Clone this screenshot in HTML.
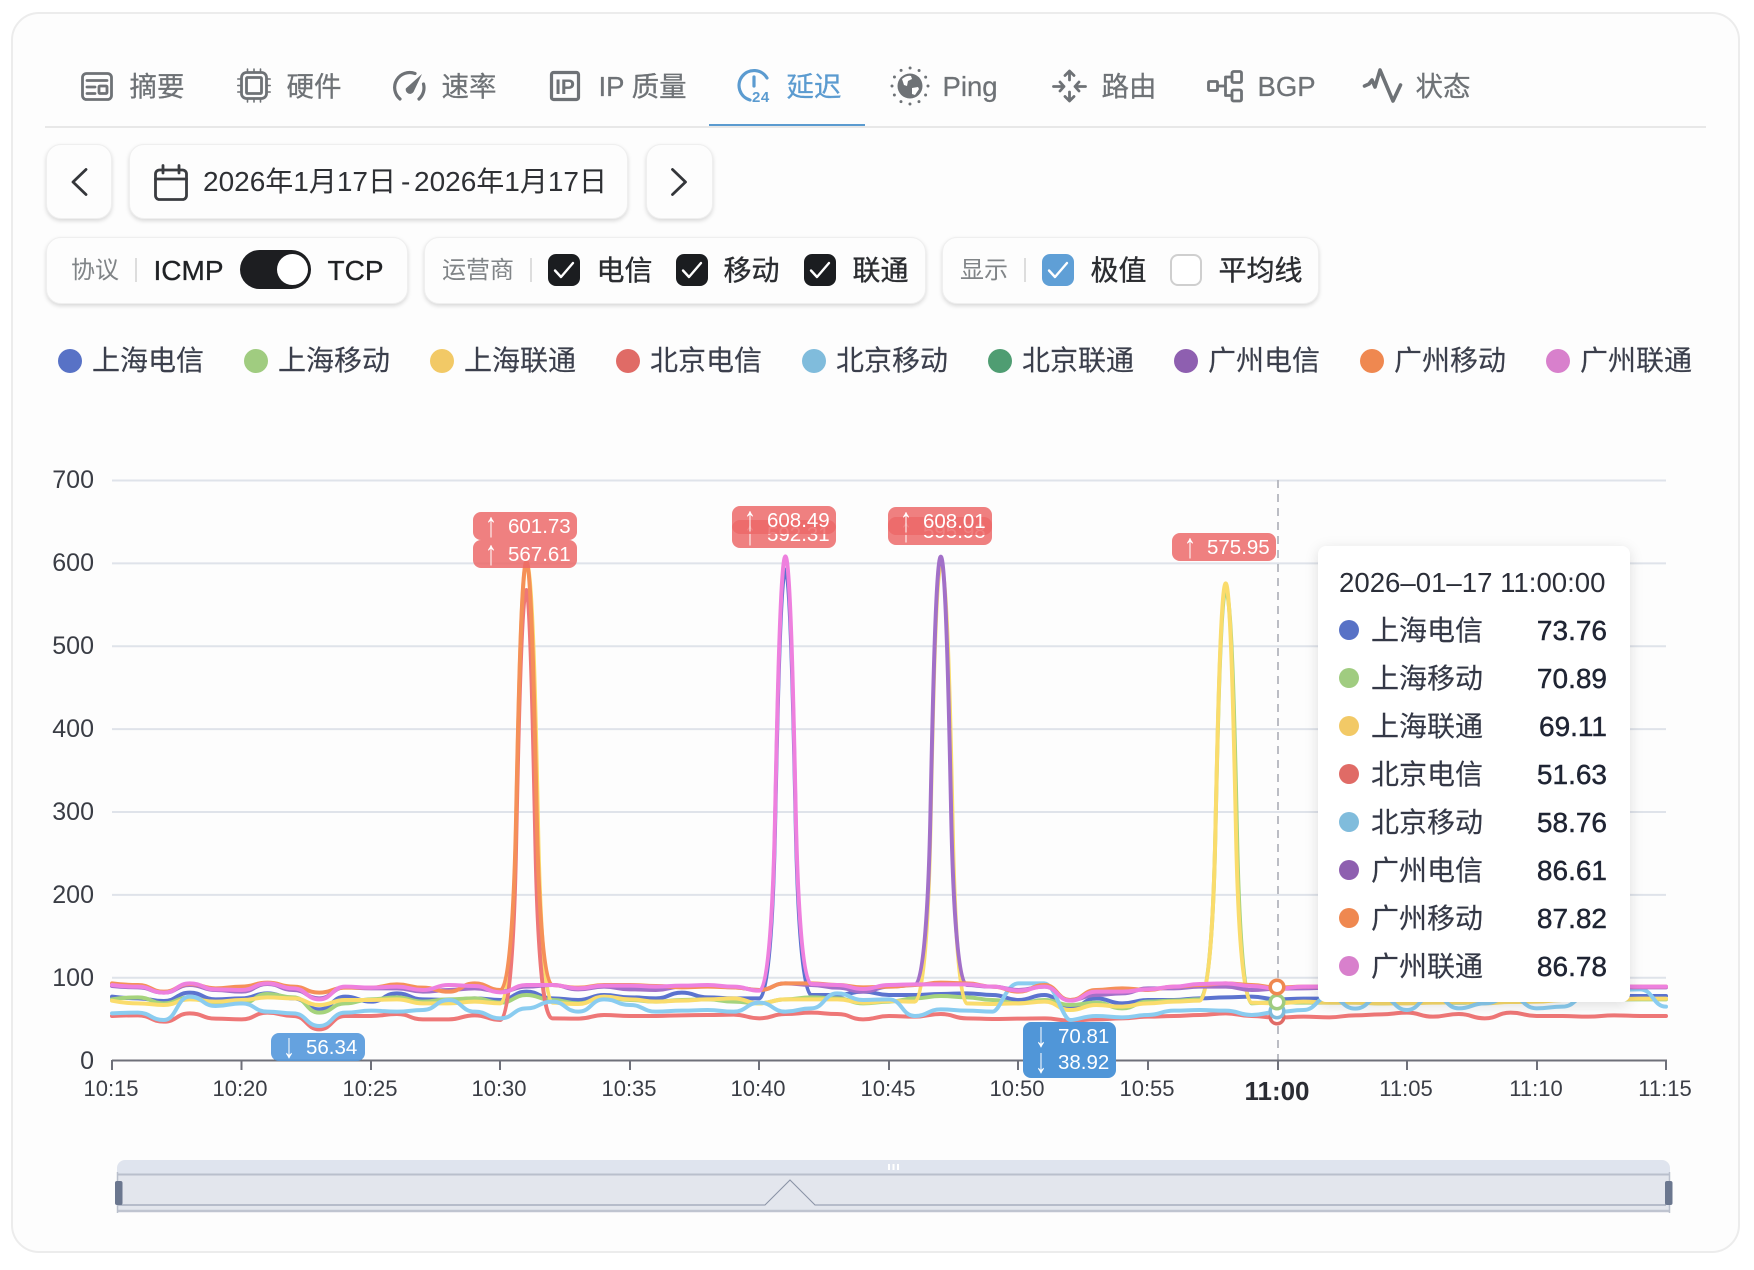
<!DOCTYPE html>
<html lang="zh"><head><meta charset="utf-8"><title>延迟</title>
<style>
html,body{margin:0;padding:0;background:#fff}
body{position:relative;width:1754px;height:1270px;overflow:hidden;font-family:"Liberation Sans","Noto Sans CJK SC",sans-serif}
#card{position:absolute;left:11px;top:12px;width:1725px;height:1237px;border:2px solid #ececec;border-radius:28px;background:#fdfdfd}
.t{position:absolute;white-space:nowrap;line-height:1}
.tab{font-size:27.5px;color:#6e7276;margin:.5px 0 0 -.5px;-webkit-text-stroke:.25px #6e7276}
.box{position:absolute;background:#fdfdfd;border:1px solid #efefef;border-radius:15px;box-shadow:0 2px 4px rgba(0,0,0,.15);box-sizing:border-box}
.sep{position:absolute;width:2px;background:#ddd;top:258px;height:24px}
.g{font-size:24px;color:#808487;margin:1px 0 0 -1px}
.d{font-size:28px;color:#2b2d31;margin:.5px 0 0 -.5px;-webkit-text-stroke:.35px #2b2d31}
.cb{position:absolute;top:254px;width:32px;height:32px;border-radius:8px;background:#1b1d20}
.cb svg{position:absolute;left:0;top:0}
.dot{position:absolute;border-radius:50%}
.lg{font-size:28px;color:#3b3f4c;margin:.75px 0 0 -1px;-webkit-text-stroke:.15px #3b3f4c}
.yl{font-size:25px;color:#3a3d45;text-align:right;width:60px;left:34px}
.xl{font-size:22px;color:#3a3d45;text-align:center;width:80px;margin-top:.5px}
.lb{position:absolute;width:104px;height:28px;border-radius:8px;background:rgba(236,104,104,.84);color:#fff;font-size:20.5px;line-height:29px;box-sizing:border-box;padding-left:35px;white-space:nowrap}
.lb i{position:absolute;left:12px;top:-1px;font-style:normal;font-size:24px;transform:scale(1,1.45)}
.bl{background:rgba(84,152,220,.9)}
#tip{position:absolute;left:1318px;top:546px;width:312px;height:456px;background:#fff;border-radius:8px;box-shadow:0 3px 14px rgba(0,0,0,.13)}
.tn{font-size:28px;color:#343846;left:1371px;-webkit-text-stroke:.15px #343846}
.tv{font-size:28px;color:#1f2433;left:1480px;width:127px;text-align:right;-webkit-text-stroke:.45px #1f2433}
svg{position:absolute;overflow:visible}
.ic{fill:none;stroke:#6e7276;stroke-width:2.8;stroke-linecap:round;stroke-linejoin:round}
.ln path{fill:none;stroke-width:4;stroke-linecap:round;stroke-linejoin:round;vector-effect:non-scaling-stroke}
</style></head><body>
<div id="card"></div>

<!-- tabs -->
<svg class="ic" style="left:81px;top:72px" width="32" height="29"><rect x="1.5" y="1.5" width="29" height="26" rx="4"/><path d="M6 8.5H26M6 15H14M6 21.500H14"/><rect x="18" y="14" width="8" height="7.500" rx="1"/></svg>
<div class="t tab" style="left:130px;top:72px">摘要</div>
<svg class="ic" style="left:237px;top:68px" width="34" height="35"><rect x="4.500" y="4.500" width="25" height="26" rx="5"/><rect x="9.500" y="9.500" width="15" height="16" rx="1"/><path stroke-width="1.600" d="M.8 11H4M.8 17.500H4M.8 24H4M30 11H33.200M30 17.500H33.200M30 24H33.200M10.500 1V4M17 1V4M23.500 1V4M10.500 31V34M17 31V34M23.500 31V34"/></svg>
<div class="t tab" style="left:287px;top:72px">硬件</div>
<svg style="left:392px;top:71px" width="34" height="30"><path class="ic" style="stroke-width:3.2" d="M8 28A15 15 0 0 1 23 2.500M31.500 13A15 15 0 0 1 27 28"/><path fill="#6e7276" d="M30 3L21.500 21A4.300 4.300 0 0 1 13.800 17.500Z"/></svg>
<div class="t tab" style="left:442px;top:72px">速率</div>
<svg style="left:550px;top:71px" width="30" height="30"><rect class="ic" style="stroke-width:3.2" x="1.500" y="1.500" width="27" height="27" rx="2"/><text x="15" y="23" text-anchor="middle" font-family="Liberation Sans" font-weight="bold" font-size="21" fill="#6e7276">IP</text></svg>
<div class="t tab" style="left:599px;top:72px">IP 质量</div>
<svg style="left:737px;top:69px" width="35" height="33"><path class="ic" style="stroke:#5b9bd0;stroke-width:3.2" d="M30 9A15 15 0 1 0 13 31M17 8V17"/><text x="15" y="33" font-family="Liberation Sans" font-weight="bold" font-size="15" letter-spacing=".5" fill="#5b9bd0">24</text></svg>
<div class="t tab" style="left:787px;top:72px;color:#5b9bd0;-webkit-text-stroke-color:#5b9bd0">延迟</div>
<div style="position:absolute;left:709px;top:124px;width:156px;height:2px;background:#5b9bd0"></div>
<svg style="left:890px;top:67px" width="40" height="38"><circle cx="20" cy="19" r="18" fill="none" stroke="#6e7276" stroke-width="3" stroke-linecap="round" stroke-dasharray="0 9.42"/><circle cx="20" cy="19" r="12.500" fill="#6e7276"/><path fill="#fff" d="M12 12q5-4 9-3l1 3-4 2-1 5-3-1-1-3zM22 21l6-1 1 2-4 6-3-1z"/></svg>
<div class="t tab" style="left:943px;top:72px">Ping</div>
<svg class="ic" style="left:1052px;top:69px" width="35" height="34"><path d="M17.500 11V2M13 6.500L17.500 2 22 6.500M17.500 23V32M13 27.500L17.500 32 22 27.500M1.500 17.500H12M8 13L12 17.500 8 22M33.500 17.500H23M27 13L23 17.500 27 22"/></svg>
<div class="t tab" style="left:1102px;top:72px">路由</div>
<svg class="ic" style="left:1207px;top:70px" width="36" height="32"><rect x="1.500" y="11.500" width="9" height="9" rx="1"/><rect x="25" y="1.500" width="9.500" height="11" rx="1.500"/><rect x="25" y="20" width="9.500" height="11" rx="1.500"/><path d="M10.500 16H18.500M25 7H18.500V25.500H25"/></svg>
<div class="t tab" style="left:1258px;top:72px">BGP</div>
<svg class="ic" style="left:1363px;top:68px" width="39" height="35"><path style="stroke-width:3.6" d="M1.500 18L6 16L9 12L12 19L17 2L30 33L37.500 17"/></svg>
<div class="t tab" style="left:1416px;top:72px">状态</div>
<div style="position:absolute;left:45px;top:126px;width:1661px;height:2px;background:#e8e8e8"></div>

<!-- date row -->
<div class="box" style="left:46px;top:144px;width:66px;height:75px"></div>
<svg class="ic" style="left:71px;top:168px;stroke:#34363a" width="16" height="28"><path d="M15 1.500L2 14 15 26.500"/></svg>
<div class="box" style="left:129px;top:144px;width:499px;height:75px"></div>
<svg class="ic" style="left:154px;top:164px;stroke:#3a3c40" width="34" height="37"><rect x="1.500" y="6" width="31" height="29.500" rx="4"/><path d="M1.500 15H32.500M9 1.500V9M25 1.500V9"/></svg>
<div class="t" style="left:203px;top:168px;font-size:28px;color:#2e3034">2026年1月17日</div>
<div class="t" style="left:401px;top:168px;font-size:28px;color:#2e3034">-</div>
<div class="t" style="left:414px;top:168px;font-size:28px;color:#2e3034">2026年1月17日</div>
<div class="box" style="left:646px;top:144px;width:67px;height:75px"></div>
<svg class="ic" style="left:671px;top:168px;stroke:#34363a" width="16" height="28"><path d="M1.500 1.500L14.500 14 1.500 26.500"/></svg>

<!-- filter row -->
<div class="box" style="left:46px;top:237px;width:362px;height:67px"></div>
<div class="t g" style="left:72px;top:258px">协议</div><div class="sep" style="left:135px"></div>
<div class="t d" style="left:154px;top:256px;color:#1f2124">ICMP</div>
<div style="position:absolute;left:240px;top:250px;width:71px;height:39px;border-radius:20px;background:#1d1e21"></div>
<div style="position:absolute;left:277px;top:254px;width:31px;height:31px;border-radius:50%;background:#fff"></div>
<div class="t d" style="left:328px;top:256px;color:#1f2124">TCP</div>

<div class="box" style="left:424px;top:237px;width:502px;height:67px"></div>
<div class="t g" style="left:443px;top:258px">运营商</div><div class="sep" style="left:530px"></div>
<div class="cb" style="left:548px"><svg width="32" height="32" fill="none" stroke="#fff" stroke-width="2.400" stroke-linecap="round" stroke-linejoin="round"><path d="M7 16.500L13 23L25 9"/></svg></div>
<div class="t d" style="left:597px;top:256px">电信</div>
<div class="cb" style="left:676px"><svg width="32" height="32" fill="none" stroke="#fff" stroke-width="2.400" stroke-linecap="round" stroke-linejoin="round"><path d="M7 16.500L13 23L25 9"/></svg></div>
<div class="t d" style="left:724px;top:256px">移动</div>
<div class="cb" style="left:804px"><svg width="32" height="32" fill="none" stroke="#fff" stroke-width="2.400" stroke-linecap="round" stroke-linejoin="round"><path d="M7 16.500L13 23L25 9"/></svg></div>
<div class="t d" style="left:853px;top:256px">联通</div>

<div class="box" style="left:942px;top:237px;width:377px;height:67px"></div>
<div class="t g" style="left:961px;top:258px">显示</div><div class="sep" style="left:1024px"></div>
<div class="cb" style="left:1042px;background:#5f9fd6"><svg width="32" height="32" fill="none" stroke="#fff" stroke-width="2.400" stroke-linecap="round" stroke-linejoin="round"><path d="M7 16.500L13 23L25 9"/></svg></div>
<div class="t d" style="left:1091px;top:256px">极值</div>
<div class="cb" style="left:1170px;background:#fff;border:2px solid #cfcfcf;box-sizing:border-box"></div>
<div class="t d" style="left:1219px;top:256px">平均线</div>

<!-- legend -->
<div class="dot" style="left:58px;top:349px;width:24px;height:24px;background:#5872c6"></div><div class="t lg" style="left:93px;top:346px">上海电信</div>
<div class="dot" style="left:244px;top:349px;width:24px;height:24px;background:#a0cc80"></div><div class="t lg" style="left:279px;top:346px">上海移动</div>
<div class="dot" style="left:430px;top:349px;width:24px;height:24px;background:#f2c966"></div><div class="t lg" style="left:465px;top:346px">上海联通</div>
<div class="dot" style="left:616px;top:349px;width:24px;height:24px;background:#e06b66"></div><div class="t lg" style="left:651px;top:346px">北京电信</div>
<div class="dot" style="left:802px;top:349px;width:24px;height:24px;background:#80bcdc"></div><div class="t lg" style="left:837px;top:346px">北京移动</div>
<div class="dot" style="left:988px;top:349px;width:24px;height:24px;background:#4f9d72"></div><div class="t lg" style="left:1023px;top:346px">北京联通</div>
<div class="dot" style="left:1174px;top:349px;width:24px;height:24px;background:#8e5fb0"></div><div class="t lg" style="left:1209px;top:346px">广州电信</div>
<div class="dot" style="left:1360px;top:349px;width:24px;height:24px;background:#ef8850"></div><div class="t lg" style="left:1395px;top:346px">广州移动</div>
<div class="dot" style="left:1546px;top:349px;width:24px;height:24px;background:#d880cc"></div><div class="t lg" style="left:1581px;top:346px">广州联通</div>

<!-- y labels -->
<div class="t yl" style="top:468px">700</div><div class="t yl" style="top:551px">600</div><div class="t yl" style="top:634px">500</div><div class="t yl" style="top:717px">400</div><div class="t yl" style="top:800px">300</div><div class="t yl" style="top:883px">200</div><div class="t yl" style="top:966px">100</div><div class="t yl" style="top:1049px">0</div>
<!-- x labels -->
<div class="t xl" style="left:71px;top:1077px">10:15</div><div class="t xl" style="left:200px;top:1077px">10:20</div><div class="t xl" style="left:330px;top:1077px">10:25</div><div class="t xl" style="left:459px;top:1077px">10:30</div><div class="t xl" style="left:589px;top:1077px">10:35</div><div class="t xl" style="left:718px;top:1077px">10:40</div><div class="t xl" style="left:848px;top:1077px">10:45</div><div class="t xl" style="left:977px;top:1077px">10:50</div><div class="t xl" style="left:1107px;top:1077px">10:55</div>
<div class="t xl" style="left:1237px;top:1077px;font-weight:bold;font-size:26px;color:#2a2c33">11:00</div>
<div class="t xl" style="left:1366px;top:1077px">11:05</div><div class="t xl" style="left:1496px;top:1077px">11:10</div><div class="t xl" style="left:1625px;top:1077px">11:15</div>

<!-- chart -->
<svg style="left:0;top:0" width="1754" height="1270">
<g stroke="#dfe3ea" stroke-width="2"><path d="M112 480.500H1666M112 563.400H1666M112 646.300H1666M112 729.100H1666M112 812H1666M112 894.900H1666M112 977.700H1666"/></g>
<path d="M1278 480V1060" stroke="#b4b6bd" stroke-width="1.800" stroke-dasharray="8 6"/>
<g class="ln" transform="translate(112 940) scale(25.9 .33333)">
<path stroke="#5b73cf" d="M0 170S.5 175 1 175S1.500 183 2 183S2.500 158 3 158S3.500 178 4 178S4.500 175 5 175S5.500 160 6 160S6.500 175 7 175S7.500 208 8 208S8.500 170 9 170S9.500 185 10 185S10.500 160 11 160S11.500 178 12 178S12.500 180 13 180S13.500 175 14 175S14.500 180 15 180S15.500 155 16 155S16.500 175 17 175S17.500 180 18 180S18.500 165 19 165S19.500 172 20 172S20.500 175 21 175S21.500 158 22 158S22.500 172 23 172S23.500 175 24 175S24.500 175 25 175C25.350 175 25.530 -82 25.600 -339C25.670 -597 25.800 -1111 26 -1111C26.200 -1111 26.330 -601 26.400 -345C26.470 -90 26.650 165 27 165S27.500 165 28 165S28.500 155 29 155S29.500 165 30 165S30.500 165 31 165S31.500 162 32 162S32.500 160 33 160S33.500 165 34 165S34.500 180 35 180S35.500 165 36 165S36.500 205 37 205S37.500 175 38 175S38.500 190 39 190S39.500 180 40 180S40.500 180 41 180S41.500 175 42 175S42.500 172 43 172S43.500 170 44 170S44.500 178 45 178S45.500 176 46 176S46.500 176 47 176S47.500 175 48 175S48.500 178 49 178S49.500 175 50 175S50.500 175 51 175S51.500 178 52 178S52.500 176 53 176S53.500 172 54 172S54.500 170 55 170S55.500 172 56 172S56.500 168 57 168S57.500 168 58 168S58.500 168 59 168S59.500 168 60 168"/>
<path stroke="#a5d37c" d="M0 178S.5 172 1 172S1.500 190 2 190S2.500 172 3 172S3.500 190 4 190S4.500 190 5 190S5.500 162 6 162S6.500 172 7 172S7.500 218 8 218S8.500 190 9 190S9.500 178 10 178S10.500 172 11 172S11.500 185 12 185S12.500 178 13 178S13.500 175 14 175S14.500 188 15 188S15.500 165 16 165S16.500 180 17 180S17.500 190 18 190S18.500 172 19 172S19.500 180 20 180S20.500 185 21 185S21.500 180 22 180S22.500 178 23 178S23.500 185 24 185S24.500 190 25 190S25.500 178 26 178S26.500 172 27 172S27.500 175 28 175S28.500 190 29 190S29.500 185 30 185S30.500 175 31 175S31.500 168 32 168S32.500 172 33 172S33.500 180 34 180S34.500 190 35 190S35.500 180 36 180S36.500 195 37 195S37.500 188 38 188S38.500 205 39 205S39.500 185 40 185S40.500 182 41 182S41.500 178 42 178C42.350 178 42.530 -68 42.600 -313C42.670 -559 42.800 -1050 43 -1050C43.240 -1050 43.370 -554 43.440 -306C43.510 -58 43.690 190 44 190S44.500 186 45 186S45.500 188 46 188S46.500 188 47 188S47.500 188 48 188S48.500 190 49 190S49.500 188 50 188S50.500 186 51 186S51.500 188 52 188S52.500 186 53 186S53.500 185 54 185S54.500 182 55 182S55.500 180 56 180S56.500 180 57 180S57.500 178 58 178S58.500 178 59 178S59.500 178 60 178"/>
<path stroke="#fadc6c" d="M0 182S.5 190 1 190S1.500 195 2 195S2.500 178 3 178S3.500 185 4 185S4.500 180 5 180S5.500 172 6 172S6.500 175 7 175S7.500 195 8 195S8.500 180 9 180S9.500 180 10 180S10.500 178 11 178S11.500 190 12 190S12.500 190 13 190S13.500 185 14 185S14.500 190 15 190C15.350 190 15.530 -74 15.600 -338C15.670 -603 15.800 -1131 16 -1131C16.250 -1131 16.380 -603 16.450 -340C16.520 -76 16.700 188 17 188S17.500 192 18 192S18.500 170 19 170S19.500 178 20 178S20.500 185 21 185S21.500 182 22 182S22.500 178 23 178S23.500 175 24 175S24.500 190 25 190S25.500 178 26 178S26.500 178 27 178S27.500 178 28 178S28.500 188 29 188S29.500 183 30 183S30.500 185 31 185C31.350 185 31.530 -76 31.600 -337C31.670 -598 31.800 -1120 32 -1120C32.260 -1120 32.390 -596 32.460 -334C32.530 -72 32.710 190 33 190S33.500 192 34 192S34.500 190 35 190S35.500 185 36 185S36.500 210 37 210S37.500 195 38 195S38.500 200 39 200S39.500 190 40 190S40.500 185 41 185S41.500 182 42 182C42.350 182 42.530 -68 42.600 -319C42.670 -569 42.800 -1070 43 -1070C43.200 -1070 43.330 -567 43.400 -315C43.470 -64 43.650 188 44 188S44.500 190 45 190S45.500 185 46 185S46.500 188 47 188S47.500 188 48 188S48.500 190 49 190S49.500 190 50 190S50.500 188 51 188S51.500 186 52 186S52.500 190 53 190S53.500 186 54 186S54.500 185 55 185S55.500 180 56 180S56.500 178 57 178S57.500 178 58 178S58.500 176 59 176S59.500 176 60 176"/>
<path stroke="#ee7777" d="M0 228S.5 226 1 226S1.500 245 2 245S2.500 220 3 220S3.500 236 4 236S4.500 238 5 238S5.500 218 6 218S6.500 228 7 228S7.500 268 8 268S8.500 228 9 228S9.500 228 10 228S10.500 222 11 222S11.500 238 12 238S12.500 238 13 238S13.500 226 14 226S14.500 240 15 240C15.350 240 15.530 -18 15.600 -276C15.670 -534 15.800 -1050 16 -1050C16.150 -1050 16.280 -536 16.350 -279C16.420 -22 16.600 235 17 235S17.500 236 18 236S18.500 225 19 225S19.500 228 20 228S20.500 228 21 228S21.500 226 22 226S22.500 225 23 225S23.500 224 24 224S24.500 235 25 235S25.500 222 26 222S26.500 218 27 218S27.500 222 28 222S28.500 238 29 238S29.500 228 30 228S30.500 230 31 230S31.500 222 32 222S32.500 235 33 235S33.500 237 34 237S34.500 236 35 236S35.500 235 36 235S36.500 242 37 242S37.500 238 38 238S38.500 235 39 235S39.500 230 40 230S40.500 228 41 228S41.500 225 42 225S42.500 220 43 220S43.500 228 44 228S44.500 233 45 233S45.500 230 46 230S46.500 232 47 232S47.500 226 48 226S48.500 223 49 223S49.500 218 50 218S50.500 230 51 230S51.500 222 52 222S52.500 235 53 235S53.500 218 54 218S54.500 228 55 228S55.500 228 56 228S56.500 230 57 230S57.500 226 58 226S58.500 228 59 228S59.500 228 60 228"/>
<path stroke="#8accf0" d="M0 220S.5 218 1 218S1.500 240 2 240S2.500 170 3 170S3.500 198 4 198S4.500 190 5 190S5.500 215 6 215S6.500 220 7 220S7.500 258 8 258S8.500 218 9 218S9.500 212 10 212S10.500 215 11 215S11.500 210 12 210S12.500 180 13 180S13.500 215 14 215S14.500 235 15 235S15.500 205 16 205S16.500 185 17 185S17.500 215 18 215S18.500 178 19 178S19.500 195 20 195S20.500 215 21 215S21.500 212 22 212S22.500 210 23 210S23.500 215 24 215S24.500 188 25 188S25.500 215 26 215S26.500 205 27 205S27.500 160 28 160S28.500 180 29 180S29.500 178 30 178S30.500 228 31 228S31.500 208 32 208S32.500 212 33 212S33.500 215 34 215C34.300 215 34.500 130 35 130S35.500 130 36 130C36.400 130 36.700 240 37 240S37.500 228 38 228S38.500 232 39 232S39.500 225 40 225S40.500 212 41 212S41.500 210 42 210S42.500 212 43 212S43.500 225 44 225S44.500 216 45 216S45.500 210 46 210S46.500 170 47 170S47.500 206 48 206S48.500 170 49 170S49.500 210 50 210S50.500 165 51 165S51.500 205 52 205S52.500 190 53 190S53.500 170 54 170S54.500 205 55 205S55.500 200 56 200S56.500 165 57 165S57.500 150 58 150S58.500 148 59 148S59.500 200 60 200"/>
<path stroke="#a270c8" d="M0 138S.5 142 1 142S1.500 158 2 158S2.500 135 3 135S3.500 150 4 150S4.500 155 5 155S5.500 132 6 132S6.500 150 7 150S7.500 175 8 175S8.500 142 9 142S9.500 145 10 145S10.500 145 11 145S11.500 155 12 155S12.500 150 13 150S13.500 145 14 145S14.500 155 15 155S15.500 140 16 140S16.500 135 17 135S17.500 148 18 148S18.500 140 19 140S19.500 148 20 148S20.500 150 21 150S21.500 140 22 140S22.500 138 23 138S23.500 142 24 142S24.500 150 25 150S25.500 130 26 130S26.500 135 27 135S27.500 143 28 143S28.500 155 29 155S29.500 140 30 140S30.500 135 31 135C31.350 135 31.530 -122 31.600 -379C31.670 -636 31.800 -1150 32 -1150C32.200 -1150 32.330 -636 32.400 -379C32.470 -122 32.650 135 33 135S33.500 140 34 140S34.500 150 35 150S35.500 140 36 140S36.500 180 37 180S37.500 165 38 165S38.500 160 39 160S39.500 145 40 145S40.500 145 41 145S41.500 140 42 140S42.500 140 43 140S43.500 150 44 150S44.500 146 45 146S45.500 145 46 145S46.500 143 47 143S47.500 145 48 145S48.500 142 49 142S49.500 145 50 145S50.500 145 51 145S51.500 143 52 143S52.500 145 53 145S53.500 142 54 142S54.500 145 55 145S55.500 143 56 143S56.500 143 57 143S57.500 142 58 142S58.500 142 59 142S59.500 142 60 142"/>
<path stroke="#f59058" d="M0 130S.5 135 1 135S1.500 155 2 155S2.500 132 3 132S3.500 145 4 145S4.500 140 5 140S5.500 128 6 128S6.500 140 7 140S7.500 158 8 158S8.500 143 9 143S9.500 143 10 143S10.500 133 11 133S11.500 143 12 143S12.500 155 13 155S13.500 130 14 130S14.500 150 15 150C15.350 150 15.530 -107 15.600 -364C15.670 -620 15.800 -1134 16 -1134C16.200 -1134 16.330 -626 16.400 -373C16.470 -119 16.650 135 17 135S17.500 143 18 143S18.500 135 19 135S19.500 135 20 135S20.500 138 21 138S21.500 142 22 142S22.500 140 23 140S23.500 142 24 142S24.500 150 25 150S25.500 130 26 130S26.500 130 27 130S27.500 135 28 135S28.500 142 29 142S29.500 140 30 140S30.500 135 31 135S31.500 128 32 128S32.500 130 33 130S33.500 140 34 140S34.500 155 35 155S35.500 135 36 135S36.500 180 37 180S37.500 150 38 150S38.500 145 39 145S39.500 150 40 150S40.500 140 41 140S41.500 135 42 135S42.500 130 43 130S43.500 135 44 135S44.500 143 45 143S45.500 140 46 140S46.500 140 47 140S47.500 142 48 142S48.500 140 49 140S49.500 140 50 140S50.500 138 51 138S51.500 140 52 140S52.500 140 53 140S53.500 140 54 140S54.500 140 55 140S55.500 140 56 140S56.500 138 57 138S57.500 138 58 138S58.500 140 59 140S59.500 140 60 140"/>
<path stroke="#ee80de" d="M0 135S.5 140 1 140S1.500 158 2 158S2.500 130 3 130S3.500 148 4 148S4.500 150 5 150S5.500 130 6 130S6.500 145 7 145S7.500 178 8 178S8.500 140 9 140S9.500 143 10 143S10.500 140 11 140S11.500 150 12 150S12.500 135 13 135S13.500 138 14 138S14.500 157 15 157S15.500 135 16 135S16.500 135 17 135S17.500 145 18 145S18.500 137 19 137S19.500 137 20 137S20.500 140 21 140S21.500 137 22 137S22.500 135 23 135S23.500 140 24 140S24.500 152 25 152C25.350 152 25.530 -109 25.600 -369C25.670 -630 25.800 -1151 26 -1151C26.200 -1151 26.330 -638 26.400 -381C26.470 -125 26.650 132 27 132S27.500 135 28 135S28.500 147 29 147S29.500 135 30 135S30.500 133 31 133S31.500 133 32 133S32.500 133 33 133S33.500 140 34 140S34.500 152 35 152S35.500 140 36 140S36.500 182 37 182S37.500 155 38 155S38.500 155 39 155S39.500 148 40 148S40.500 140 41 140S41.500 132 42 132S42.500 130 43 130S43.500 138 44 138S44.500 146 45 146S45.500 140 46 140S46.500 140 47 140S47.500 142 48 142S48.500 140 49 140S49.500 140 50 140S50.500 140 51 140S51.500 142 52 142S52.500 140 53 140S53.500 140 54 140S54.500 140 55 140S55.500 140 56 140S56.500 140 57 140S57.500 138 58 138S58.500 140 59 140S59.500 140 60 140"/>
</g>
<path d="M112 1060.500H1667" stroke="#6e7079" stroke-width="2"/>
<path stroke="#6e7079" stroke-width="2" d="M112 1060V1070M241.500 1060V1070M371 1060V1070M500 1060V1070M630 1060V1070M759 1060V1070M889 1060V1070M1018 1060V1070M1148 1060V1070M1278 1060V1070M1407 1060V1070M1537 1060V1070M1666 1060V1070"/>
<g fill="#fff" stroke-width="3.500"><circle cx="1277" cy="1017" r="6.800" stroke="#e06b66"/><circle cx="1277" cy="1011" r="6.800" stroke="#80bcdc"/><circle cx="1277" cy="1002" r="6.800" stroke="#a0cc80"/><circle cx="1277" cy="987" r="6.800" stroke="#ef8850"/></g>
<!-- data zoom -->
<path d="M117 1168a8 8 0 0 1 8-8H1662a8 8 0 0 1 8 8V1174H117Z" fill="#dfe4ee"/>
<rect x="117" y="1174" width="1553" height="38" fill="#e3e6ed"/>
<path d="M117 1174.500H1670" stroke="#b9bfcc" stroke-width="2"/>
<path d="M117 1211H1670" stroke="#bfc4d0" stroke-width="2.600"/>
<path d="M118 1205H765L790 1180L815 1205H1666" fill="none" stroke="#8a93a6" stroke-width="1.100"/>
<path d="M117.500 1172V1213M1669.500 1172V1213" stroke="#b9bfcc" stroke-width="1.500"/>
<rect x="115" y="1181" width="7.500" height="24" rx="2" fill="#6b778f"/><rect x="1665" y="1181" width="7.500" height="24" rx="2" fill="#6b778f"/>
<path d="M889 1164V1170M893.500 1164V1170M898 1164V1170" stroke="#fff" stroke-width="2"/>
</svg>

<!-- mark labels -->
<div class="lb" style="left:473px;top:512px"><i>↑</i>601.73</div>
<div class="lb" style="left:473px;top:540px"><i>↑</i>567.61</div>
<div class="lb" style="left:732px;top:520px"><i>↑</i>592.31</div>
<div class="lb" style="left:732px;top:506px"><i>↑</i>608.49</div>
<div class="lb" style="left:888px;top:517px"><i>↑</i>595.98</div>
<div class="lb" style="left:888px;top:507px"><i>↑</i>608.01</div>
<div class="lb" style="left:1172px;top:533px"><i>↑</i>575.95</div>
<div class="lb bl" style="left:271px;top:1033px;width:94px"><i>↓</i>56.34</div>
<div class="lb" style="left:1023px;top:1022px;width:93px;height:56px;background:#5096d8"></div>
<div class="lb" style="left:1023px;top:1022px;width:93px;background:none"><i>↓</i>70.81</div>
<div class="lb" style="left:1023px;top:1048px;width:93px;background:none"><i>↓</i>38.92</div>

<!-- tooltip -->
<div id="tip"></div>
<div class="t" style="left:1339px;top:569px;font-size:27.6px;color:#2b2e38">2026–01–17 11:00:00</div>
<div class="dot" style="left:1339px;top:620px;width:20px;height:20px;background:#5872c6"></div><div class="t tn" style="top:617px">上海电信</div><div class="t tv" style="top:617px">73.76</div>
<div class="dot" style="left:1339px;top:668px;width:20px;height:20px;background:#a0cc80"></div><div class="t tn" style="top:665px">上海移动</div><div class="t tv" style="top:665px">70.89</div>
<div class="dot" style="left:1339px;top:716px;width:20px;height:20px;background:#f2c966"></div><div class="t tn" style="top:713px">上海联通</div><div class="t tv" style="top:713px">69.11</div>
<div class="dot" style="left:1339px;top:764px;width:20px;height:20px;background:#e06b66"></div><div class="t tn" style="top:761px">北京电信</div><div class="t tv" style="top:761px">51.63</div>
<div class="dot" style="left:1339px;top:812px;width:20px;height:20px;background:#80bcdc"></div><div class="t tn" style="top:809px">北京移动</div><div class="t tv" style="top:809px">58.76</div>
<div class="dot" style="left:1339px;top:860px;width:20px;height:20px;background:#8e5fb0"></div><div class="t tn" style="top:857px">广州电信</div><div class="t tv" style="top:857px">86.61</div>
<div class="dot" style="left:1339px;top:908px;width:20px;height:20px;background:#ef8850"></div><div class="t tn" style="top:905px">广州移动</div><div class="t tv" style="top:905px">87.82</div>
<div class="dot" style="left:1339px;top:956px;width:20px;height:20px;background:#d880cc"></div><div class="t tn" style="top:953px">广州联通</div><div class="t tv" style="top:953px">86.78</div>
</body></html>
